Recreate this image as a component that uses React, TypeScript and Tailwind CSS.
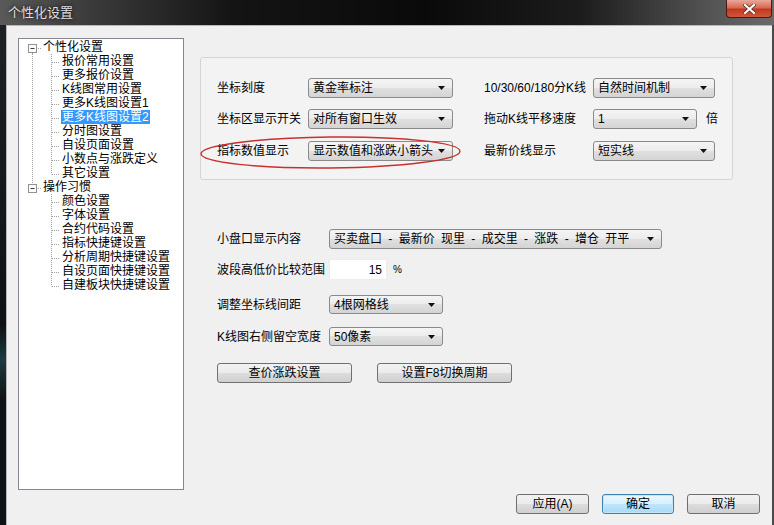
import React from "react";

type Row = {
  text: string;
  root?: boolean;
  rootLast?: boolean;
  last?: boolean;
  parentLast?: boolean;
  selected?: boolean;
};

const rows: Row[] = [
  { text: "个性化设置", root: true },
  { text: "报价常用设置" },
  { text: "更多报价设置" },
  { text: "K线图常用设置" },
  { text: "更多K线图设置1" },
  { text: "更多K线图设置2", selected: true },
  { text: "分时图设置" },
  { text: "自设页面设置" },
  { text: "小数点与涨跌定义" },
  { text: "其它设置", last: true },
  { text: "操作习惯", root: true, rootLast: true },
  { text: "颜色设置", parentLast: true },
  { text: "字体设置", parentLast: true },
  { text: "合约代码设置", parentLast: true },
  { text: "指标快捷键设置", parentLast: true },
  { text: "分析周期快捷键设置", parentLast: true },
  { text: "自设页面快捷键设置", parentLast: true },
  { text: "自建板块快捷键设置", parentLast: true, last: true },
];

const dot = { stroke: "#a0a0a0", strokeDasharray: "1 1", strokeWidth: 1 };

// lines + expand box in front of each tree row
const TreeLines = ({ row }: { row: Row }) => {
  if (row.root) {
    return (
      <svg width="23" height="14" className="shrink-0">
        {row.rootLast ? <line x1="13.5" y1="0" x2="13.5" y2="4" {...dot} /> : <line x1="13.5" y1="13" x2="13.5" y2="14" {...dot} />}
        <rect x="9.5" y="4.5" width="8" height="8" fill="#fbfbfb" stroke="#919191" />
        <line x1="11.5" y1="8.5" x2="15.5" y2="8.5" stroke="#3c3c3c" />
        <line x1="19" y1="8.5" x2="23" y2="8.5" {...dot} />
      </svg>
    );
  }
  return (
    <svg width="42" height="14" className="shrink-0">
      {!row.parentLast && <line x1="13.5" y1="0" x2="13.5" y2="14" {...dot} />}
      <line x1="32.5" y1="0" x2="32.5" y2={row.last ? 8.5 : 14} {...dot} />
      <line x1="33" y1="8.5" x2="41" y2="8.5" {...dot} />
    </svg>
  );
};

const Arrow = () => (
  <svg width="7" height="4" viewBox="0 0 7 4" className="shrink-0">
    <path d="M0 0H7L3.5 4Z" fill="#111" />
  </svg>
);

const Combo = ({ value, w, h = "h-[20px]" }: { value: string; w: string; h?: string }) => (
  <div
    className={`${w} ${h} shrink-0 flex items-center justify-between pl-[4px] pr-[7px] border border-[#8a8a8a] rounded-[3px] bg-[linear-gradient(#f4f4f4,#ececec_50%,#e0e0e0_50%,#d4d4d4)] text-[12px] leading-[14px] whitespace-nowrap`}
  >
    <span className="block h-[14px]">{value}</span>
    <Arrow />
  </div>
);

const Btn = ({ label, w, focus }: { label: string; w: string; focus?: boolean }) => (
  <div
    className={
      focus
        ? `${w} h-[20px] flex items-center justify-center border border-[#3c7fb1] rounded-[3px] bg-[linear-gradient(#eaf6fd,#d9f0fc_50%,#bee6fd_50%,#a7d9f5)] shadow-[inset_0_0_0_1px_#c8e8f8] text-[12px] leading-[14px]`
        : `${w} h-[20px] flex items-center justify-center border border-[#707070] rounded-[3px] bg-[linear-gradient(#f2f2f2,#ebebeb_50%,#dddddd_50%,#cfcfcf)] text-[12px] leading-[14px]`
    }
  >
    <span className="block h-[14px]">{label}</span>
  </div>
);

export default function App() {
  return (
    <div className="w-[774px] h-[525px] flex flex-col overflow-hidden bg-[#15181a] text-black font-['Liberation_Sans','Noto_Sans_CJK_SC',sans-serif]">
      {/* title bar */}
      <div className="h-[25px] shrink-0 flex justify-between pl-[8px] pr-[2px] bg-[linear-gradient(90deg,#5a5a5a_0%,#3a3a3a_12%,#141414_30%,#0a0a0a_55%,#1c1c1c_75%,#555555_92%,#6a6a6a_100%)]">
        <span className="self-center block h-[15px] text-[13px] leading-[15px] text-[#dedede] [text-shadow:0_0_4px_#000]">个性化设置</span>
        <div className="w-[46px] h-[18px] flex items-center justify-center border border-t-0 border-[#4a1a14] rounded-b-[4px] bg-[linear-gradient(#e9a99b,#d86a52_45%,#c2381e_55%,#d0583c)]">
          <svg width="13" height="10" viewBox="0 0 13 10">
            <path d="M2 1L11 9M11 1L2 9" stroke="#5a2a22" strokeWidth="3.6" strokeLinecap="square" />
            <path d="M2 1L11 9M11 1L2 9" stroke="#ffffff" strokeWidth="2.2" strokeLinecap="square" />
          </svg>
        </div>
      </div>

      <div className="flex flex-1 min-h-0">
        <div className="w-[6px] shrink-0 bg-[linear-gradient(#1d2124,#0f1214_60%,#1c3b40_67%,#0f1214_75%)]" />

        {/* client area */}
        <div className="flex-1 flex flex-col bg-[#f0f0f0] border-l border-t border-[#b8b8b8] pl-[11px] pt-[12px]">
          <div className="flex items-start">
            {/* tree */}
            <div className="w-[166px] h-[452px] shrink-0 bg-white border border-[#828790] pt-[1px] text-[12px] leading-[14px]">
              {rows.map((r) => (
                <div key={r.text} className="flex h-[14px] items-center whitespace-nowrap">
                  <TreeLines row={r} />
                  <span className={r.selected ? "block px-[1px] h-[14px] bg-[#3399ff] text-white" : "block px-[1px] h-[14px]"}>{r.text}</span>
                </div>
              ))}
            </div>

            {/* right side */}
            <div className="ml-[16px] pt-[19px] flex flex-col">
              <div className="relative w-[533px] h-[123px] border border-[#d5d5d5] rounded-[3px] bg-[#f3f3f3] pl-[16px] pt-[20px] text-[12px] leading-[14px]">
                <div className="flex items-center h-[20px]">
                  <span className="block h-[14px] w-[91px] shrink-0">坐标刻度</span>
                  <Combo value="黄金率标注" w="w-[145px]" />
                  <span className="block h-[14px] ml-[31px] w-[109px] shrink-0 whitespace-nowrap">10/30/60/180分K线</span>
                  <Combo value="自然时间机制" w="w-[122px]" />
                </div>
                <div className="flex items-center h-[20px] mt-[11px]">
                  <span className="block h-[14px] w-[91px] shrink-0 whitespace-nowrap">坐标区显示开关</span>
                  <Combo value="对所有窗口生效" w="w-[145px]" />
                  <span className="block h-[14px] ml-[31px] w-[109px] shrink-0">拖动K线平移速度</span>
                  <Combo value="1" w="w-[104px]" />
                  <span className="block h-[14px] ml-[9px]">倍</span>
                </div>
                <div className="flex items-center h-[20px] mt-[12px]">
                  <span className="block h-[14px] w-[91px] shrink-0">指标数值显示</span>
                  <Combo value="显示数值和涨跌小箭头" w="w-[145px]" />
                  <span className="block h-[14px] ml-[31px] w-[109px] shrink-0">最新价线显示</span>
                  <Combo value="短实线" w="w-[122px]" />
                </div>
                {/* red annotation ring */}
                <svg width="262" height="34" className="absolute left-[-1px] top-[78px]">
                  <ellipse cx="130.5" cy="16.5" rx="129.5" ry="15.5" fill="none" stroke="#c8302e" strokeWidth="1.4" transform="rotate(-0.6 130.5 16.5)" />
                </svg>
              </div>

              <div className="mt-[49px] pl-[17px] flex flex-col text-[12px] leading-[14px]">
                <div className="flex items-center h-[20px]">
                  <span className="block h-[14px] w-[112px] shrink-0">小盘口显示内容</span>
                  <div className="w-[333px] h-[20px] shrink-0 flex items-center justify-between pl-[4px] pr-[7px] border border-[#8a8a8a] rounded-[3px] bg-[linear-gradient(#f4f4f4,#ececec_50%,#e0e0e0_50%,#d4d4d4)] whitespace-nowrap">
                    <span className="block h-[14px] [word-spacing:3px]">买卖盘口 - 最新价 现里 - 成交里 - 涨跌 - 增仓 开平</span>
                    <Arrow />
                  </div>
                </div>
                <div className="flex items-center h-[21px] mt-[10px]">
                  <span className="block h-[14px] w-[112px] shrink-0 whitespace-nowrap">波段高低价比较范围</span>
                  <div className="w-[58px] h-[21px] bg-white border border-[#ececec] flex items-center justify-end pr-[4px]">
                    <span className="block h-[14px]">15</span>
                  </div>
                  <span className="block h-[12px] leading-[12px] ml-[6px] text-[10px]">%</span>
                </div>
                <div className="flex items-center h-[19px] mt-[15px]">
                  <span className="block h-[14px] w-[112px] shrink-0">调整坐标线间距</span>
                  <Combo value="4根网格线" w="w-[114px]" h="h-[19px]" />
                </div>
                <div className="flex items-center h-[19px] mt-[13px]">
                  <span className="block h-[14px] w-[112px] shrink-0 whitespace-nowrap">K线图右侧留空宽度</span>
                  <Combo value="50像素" w="w-[114px]" h="h-[19px]" />
                </div>
                <div className="flex items-center mt-[17px] gap-[25px]">
                  <Btn label="查价涨跌设置" w="w-[135px]" />
                  <Btn label="设置F8切换周期" w="w-[135px]" />
                </div>
              </div>
            </div>
          </div>

          {/* dialog buttons */}
          <div className="flex justify-end gap-[13px] pr-[12px] mt-[4px]">
            <Btn label="应用(A)" w="w-[73px]" />
            <Btn label="确定" w="w-[72px]" focus />
            <Btn label="取消" w="w-[73px]" />
          </div>
        </div>

        <div className="w-[2px] shrink-0 bg-[#4a4a4a]" />
      </div>
    </div>
  );
}
